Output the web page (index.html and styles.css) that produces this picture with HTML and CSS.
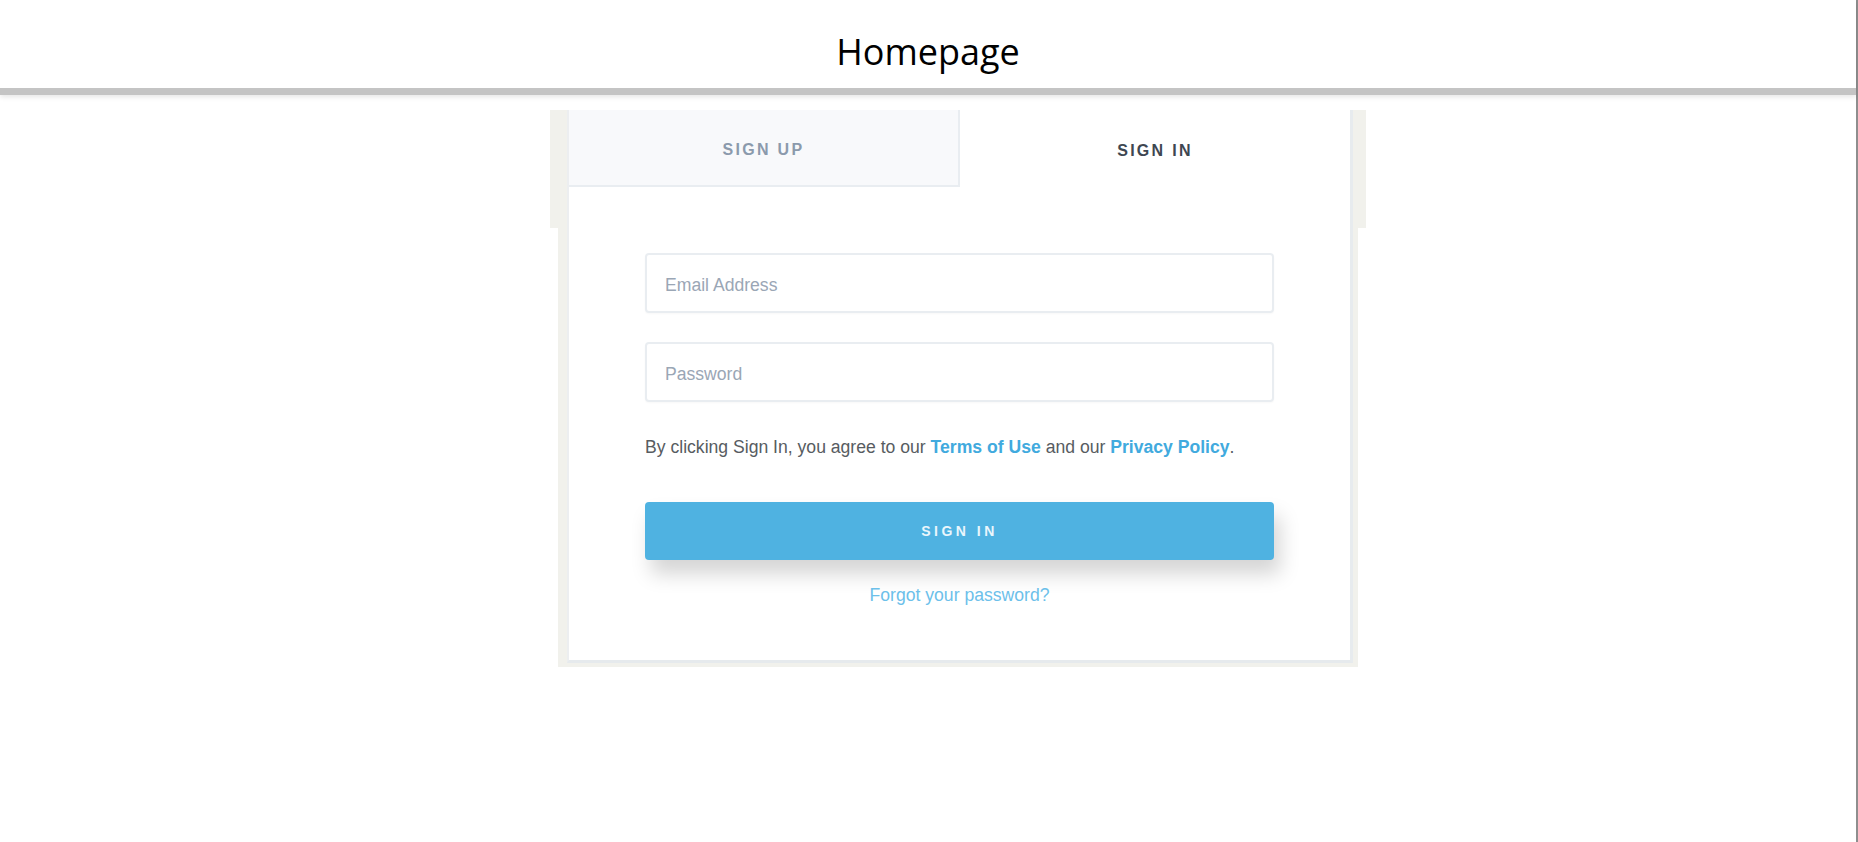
FILE: index.html
```html
<!DOCTYPE html>
<html lang="en">
<head>
<meta charset="utf-8">
<title>Homepage</title>
<link rel="stylesheet" href="styles.css">
</head>
<body>
<div class="page">
  <header class="topbar">
    <h1 class="title">Homepage</h1>
  </header>
  <main class="stage">
    <div class="frame">
      <section class="card">
        <nav class="tabs">
          <a class="tab tab-inactive" href="#">SIGN UP</a>
          <a class="tab tab-active" href="#">SIGN IN</a>
        </nav>
        <form class="form">
          <input class="field" type="email" placeholder="Email Address">
          <input class="field field-gap" type="password" placeholder="Password">
          <p class="terms">By clicking Sign In, you agree to our <a class="link" href="#">Terms of Use</a> and our <a class="link" href="#">Privacy Policy</a>.</p>
          <button class="submit" type="button">SIGN IN</button>
          <a class="forgot" href="#">Forgot your password?</a>
        </form>
      </section>
    </div>
  </main>
</div>
</body>
</html>
```
FILE: styles.css
```css
* {
  box-sizing: border-box;
}

html, body {
  margin: 0;
  padding: 0;
  background: #ffffff;
}

body {
  font-family: "Liberation Sans", Arial, sans-serif;
}

.page {
  width: 1858px;
  min-height: 100vh;
  border-right: 2px solid #8e8e8e;
  background: #ffffff;
}

.topbar {
  height: 95px;
  padding-top: 28px;
  border-bottom: 7px solid #c4c4c4;
  box-shadow: 0 2px 5px rgba(0, 0, 0, 0.1);
  text-align: center;
}

.title {
  margin: 0;
  font-family: "Open Sans", "Noto Sans", sans-serif;
  font-weight: 400;
  font-size: 36px;
  line-height: 48px;
  color: #000000;
}

.stage {
  margin: 15px 0 0 550px;
  width: 816px;
  padding: 0 8px;
  background: linear-gradient(#f1f1ec, #f1f1ec) top left / 100% 118px no-repeat;
}

.frame {
  width: 800px;
  padding: 0 5px 4px 9px;
  background: #f1f1ec;
}

.card {
  background: #ffffff;
  border-left: 2px solid #eceef0;
  border-right: 3px solid #e7ebee;
  border-bottom: 3px solid #e6eaed;
  height: 553px;
}

.tabs {
  display: grid;
  grid-template-columns: 391px 1fr;
  height: 77px;
}

.tab {
  display: flex;
  align-items: center;
  justify-content: center;
  font-weight: 700;
  font-size: 16px;
  letter-spacing: 2.3px;
  text-decoration: none;
}

.tab-inactive {
  background: #f8f9fb;
  color: #8b9aac;
  padding-top: 5px;
  border-right: 2px solid #e9edf1;
  border-bottom: 2px solid #e9edf1;
}

.tab-active {
  background: #ffffff;
  color: #3e4751;
  padding-top: 4px;
}

.form {
  display: flex;
  flex-direction: column;
  padding: 66px 76px 0;
}

.field {
  display: block;
  width: 100%;
  height: 60px;
  margin: 0;
  padding: 5px 18px 0;
  border: 2px solid #e9edf1;
  border-radius: 4px;
  background: #ffffff;
  font-family: "Liberation Sans", Arial, sans-serif;
  font-size: 17.6px;
  color: #333;
  box-shadow: 0 1px 2px rgba(0, 0, 0, 0.03);
  outline: none;
}

.field::placeholder {
  color: #9aa6b5;
  opacity: 1;
}

.field-gap {
  margin-top: 29px;
}

.terms {
  margin: 35px 0 0;
  font-size: 17.6px;
  line-height: 20px;
  color: #575c61;
  white-space: nowrap;
}

.link {
  color: #41aade;
  font-weight: 700;
  text-decoration: none;
}

.submit {
  display: block;
  width: 100%;
  height: 58px;
  margin: 45px 0 0;
  border: 0;
  border-radius: 4px;
  background: #4fb2e1;
  color: #eaf6fc;
  font-family: "Liberation Sans", Arial, sans-serif;
  font-weight: 700;
  font-size: 14px;
  letter-spacing: 3.5px;
  box-shadow: 6px 14px 20px rgba(0, 0, 0, 0.17);
}

.forgot {
  margin-top: 25px;
  align-self: center;
  font-size: 17.6px;
  line-height: 20px;
  color: #6cc0ea;
  text-decoration: none;
}
```
